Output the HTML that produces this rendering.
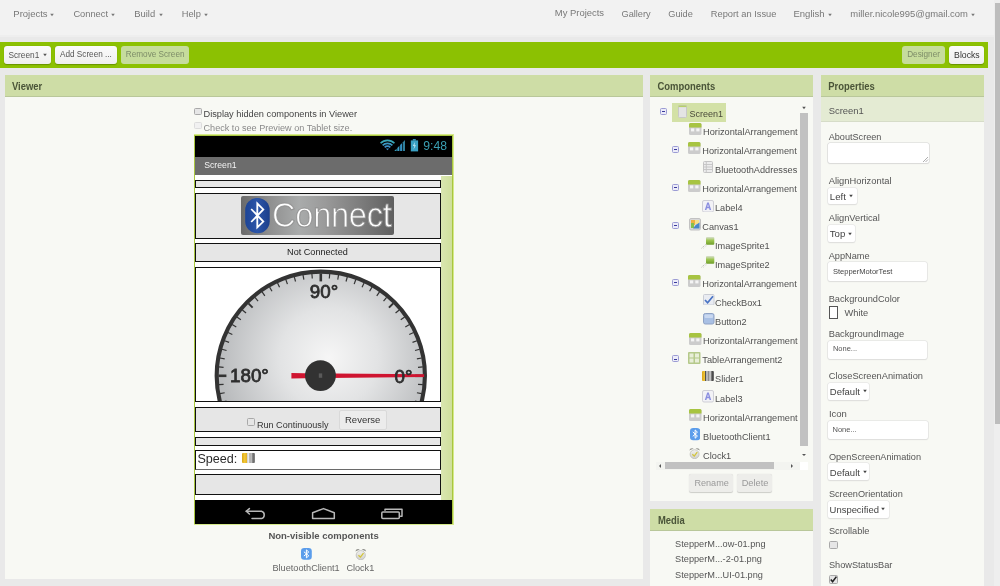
<!DOCTYPE html>
<html><head><meta charset="utf-8"><style>
html,body{margin:0;padding:0;width:1000px;height:586px;overflow:hidden;background:#e9e9e9;}
body{will-change:transform;}
.r{position:absolute;}
.t{position:absolute;white-space:nowrap;line-height:0;font-family:"Liberation Sans", sans-serif;}
</style></head><body>
<div class="r" style="left:0.00px;top:0.00px;width:1000.00px;height:586.00px;background:#e9e9e9"></div>
<div class="r" style="left:0.00px;top:0.00px;width:994.00px;height:34.50px;background:#f2f2f2"></div>
<div class="r" style="left:0.00px;top:34.50px;width:994.00px;height:2.50px;background:#eeeeee"></div>
<div class="r" style="left:994.00px;top:0.00px;width:6.00px;height:586.00px;background:#eeeeee"></div>
<div class="r" style="left:995.20px;top:3.00px;width:4.80px;height:421.00px;background:#bdbdbd"></div>
<div class="t" style="left:13.30px;top:14.11px;font-size:9.5px;color:#787878;font-weight:normal;">Projects</div>
<svg class="r" style="left:49.40px;top:11.80px" width="6" height="6" viewBox="0 0 6 6"><path d="M1.20,1.75 L4.80,1.75 L3,4.25 Z" fill="#787878"/></svg>
<div class="t" style="left:73.40px;top:14.18px;font-size:9.3px;color:#787878;font-weight:normal;">Connect</div>
<svg class="r" style="left:110.40px;top:11.80px" width="6" height="6" viewBox="0 0 6 6"><path d="M1.20,1.75 L4.80,1.75 L3,4.25 Z" fill="#787878"/></svg>
<div class="t" style="left:134.30px;top:14.14px;font-size:9.4px;color:#787878;font-weight:normal;">Build</div>
<svg class="r" style="left:157.80px;top:11.80px" width="6" height="6" viewBox="0 0 6 6"><path d="M1.20,1.75 L4.80,1.75 L3,4.25 Z" fill="#787878"/></svg>
<div class="t" style="left:181.70px;top:14.18px;font-size:9.3px;color:#787878;font-weight:normal;">Help</div>
<svg class="r" style="left:203.40px;top:11.80px" width="6" height="6" viewBox="0 0 6 6"><path d="M1.20,1.75 L4.80,1.75 L3,4.25 Z" fill="#787878"/></svg>
<div class="t" style="left:554.80px;top:13.42px;font-size:9.45px;color:#787878;font-weight:normal;">My Projects</div>
<div class="t" style="left:621.50px;top:13.51px;font-size:9.2px;color:#787878;font-weight:normal;">Gallery</div>
<div class="t" style="left:668.30px;top:13.51px;font-size:9.2px;color:#787878;font-weight:normal;">Guide</div>
<div class="t" style="left:710.80px;top:14.08px;font-size:9.3px;color:#787878;font-weight:normal;">Report an Issue</div>
<div class="t" style="left:793.50px;top:14.21px;font-size:9.5px;color:#787878;font-weight:normal;">English</div>
<svg class="r" style="left:826.60px;top:11.80px" width="6" height="6" viewBox="0 0 6 6"><path d="M1.20,1.75 L4.80,1.75 L3,4.25 Z" fill="#787878"/></svg>
<div class="t" style="left:850.30px;top:14.22px;font-size:9.45px;color:#787878;font-weight:normal;">miller.nicole995@gmail.com</div>
<svg class="r" style="left:969.80px;top:11.80px" width="6" height="6" viewBox="0 0 6 6"><path d="M1.20,1.75 L4.80,1.75 L3,4.25 Z" fill="#787878"/></svg>
<div class="r" style="left:0.00px;top:42.00px;width:988.00px;height:25.60px;background:#8cc102"></div>
<div class="r" style="left:3.60px;top:46.00px;width:47.40px;height:18.40px;background:linear-gradient(#fbfbfb,#efefef);border-radius:3px;box-shadow:0 0.5px 1px rgba(0,0,0,0.25)"></div>
<div class="t" style="left:8.40px;top:55.42px;font-size:8.3px;color:#555;font-weight:normal;">Screen1</div>
<svg class="r" style="left:41.80px;top:52.20px" width="6" height="6" viewBox="0 0 6 6"><path d="M1.20,1.70 L4.80,1.70 L3,4.30 Z" fill="#555"/></svg>
<div class="r" style="left:55.00px;top:46.00px;width:61.60px;height:18.40px;background:linear-gradient(#fbfbfb,#efefef);border-radius:3px;box-shadow:0 0.5px 1px rgba(0,0,0,0.25)"></div>
<div class="t" style="left:60.00px;top:55.46px;font-size:8.2px;color:#555;font-weight:normal;">Add Screen ...</div>
<div class="r" style="left:121.00px;top:46.00px;width:68.00px;height:18.40px;background:#c6dc9c;border-radius:3px;"></div>
<div class="t" style="left:125.80px;top:55.46px;font-size:8.2px;color:#7d8c68;font-weight:normal;">Remove Screen</div>
<div class="r" style="left:902.20px;top:46.00px;width:43.20px;height:18.40px;background:#c6dc9c;border-radius:3px;"></div>
<div class="t" style="left:907.20px;top:55.46px;font-size:8.2px;color:#7d8c68;font-weight:normal;">Designer</div>
<div class="r" style="left:949.40px;top:46.00px;width:34.80px;height:18.40px;background:linear-gradient(#fbfbfb,#efefef);border-radius:3px;box-shadow:0 0.5px 1px rgba(0,0,0,0.25)"></div>
<div class="t" style="left:954.10px;top:55.28px;font-size:8.7px;color:#333;font-weight:normal;">Blocks</div>
<div class="r" style="left:5.00px;top:74.70px;width:638.00px;height:504.30px;background:#f8f9f4"></div>
<div class="r" style="left:5.00px;top:74.70px;width:638.00px;height:22.30px;background:#cedda6;border-bottom:1px solid #b9c79a;box-sizing:border-box"></div>
<div class="t" style="left:11.90px;top:86.52px;font-size:9.45px;color:#4a5438;font-weight:bold;transform:scale(1.0,1.18);transform-origin:0.6px 3.28px;">Viewer</div>
<div class="r" style="left:650.00px;top:74.70px;width:163.20px;height:426.30px;background:#f8f9f4"></div>
<div class="r" style="left:650.00px;top:74.70px;width:163.20px;height:22.30px;background:#cedda6;border-bottom:1px solid #b9c79a;box-sizing:border-box"></div>
<div class="t" style="left:657.50px;top:86.52px;font-size:9.45px;color:#4a5438;font-weight:bold;transform:scale(1.0,1.18);transform-origin:0.6px 3.28px;">Components</div>
<div class="r" style="left:650.00px;top:508.60px;width:163.20px;height:77.40px;background:#f8f9f4"></div>
<div class="r" style="left:650.00px;top:508.60px;width:163.20px;height:22.40px;background:#cedda6;border-bottom:1px solid #b9c79a;box-sizing:border-box"></div>
<div class="t" style="left:657.90px;top:520.72px;font-size:9.45px;color:#4a5438;font-weight:bold;transform:scale(1.0,1.18);transform-origin:0.6px 3.28px;">Media</div>
<div class="r" style="left:821.00px;top:74.50px;width:163.00px;height:511.50px;background:#f8f9f4"></div>
<div class="r" style="left:821.00px;top:74.50px;width:163.00px;height:22.70px;background:#cedda6;border-bottom:1px solid #b9c79a;box-sizing:border-box"></div>
<div class="t" style="left:828.20px;top:86.52px;font-size:9.45px;color:#4a5438;font-weight:bold;transform:scale(1.0,1.18);transform-origin:0.6px 3.28px;">Properties</div>
<div class="r" style="left:821.00px;top:97.20px;width:163.00px;height:25.20px;background:#e4ebd3;border-bottom:1px solid #d6dcc8;box-sizing:border-box"></div>
<div class="r" style="left:194.30px;top:107.50px;width:7.90px;height:7.70px;background:#e6e6e6;border:1px solid #a9a9a9;border-radius:1.5px;box-sizing:border-box"></div>
<div class="t" style="left:203.50px;top:114.00px;font-size:9.22px;color:#444;font-weight:normal;">Display hidden components in Viewer</div>
<div class="r" style="left:194.30px;top:121.70px;width:7.90px;height:7.70px;background:#f1f1f1;border:1px solid #dcdcdc;border-radius:1.5px;box-sizing:border-box"></div>
<div class="t" style="left:203.50px;top:128.24px;font-size:9.12px;color:#8a8a8a;font-weight:normal;">Check to see Preview on Tablet size.</div>
<div class="r" style="left:193.60px;top:134.00px;width:260.40px;height:391.00px;background:#d6ea8a"></div>
<div class="r" style="left:194.30px;top:134.70px;width:258.80px;height:389.60px;background:#a9c640"></div>
<div class="r" style="left:195.30px;top:136.00px;width:256.50px;height:387.60px;background:#ffffff"></div>
<div class="r" style="left:195.30px;top:136.00px;width:256.50px;height:20.50px;background:#000"></div>
<div class="r" style="left:195.30px;top:156.50px;width:256.50px;height:18.30px;background:#6c6c6c"></div>
<div class="t" style="left:204.20px;top:164.98px;font-size:8.7px;color:#f4f4f4;font-weight:normal;transform:scale(1.0,1.08);transform-origin:0.6px 3.02px;">Screen1</div>
<div class="r" style="left:441.00px;top:176.00px;width:10.80px;height:324.30px;background:linear-gradient(90deg,#d9e6b0,#cfdf9c)"></div>
<div class="r" style="left:195.30px;top:500.20px;width:256.50px;height:23.40px;background:#000"></div>
<svg class="r" style="left:378px;top:137px" width="72" height="18" viewBox="378 137 72 18">
<g fill="none" stroke-width="1.7">
<path d="M394.43,143.27 A9.8,9.8 0 0 0 380.57,143.27" stroke="#3aa6b6"/>
<path d="M392.38,145.32 A6.9,6.9 0 0 0 382.62,145.32" stroke="#3a98c2"/>
<path d="M390.33,147.37 A4.0,4.0 0 0 0 384.67,147.37" stroke="#3a90c8"/>
</g>
<path d="M385.90,148.60 L387.5,150.2 L389.10,148.60 Z" fill="#3a90c8"/>
<path d="M394.5,151 L394.5,150.80 L396.6,148.66 L396.6,151 Z" fill="#3a9cb8"/><path d="M397.3,151 L397.3,147.94 L399.4,145.80 L399.4,151 Z" fill="#3a9cc4"/><path d="M400.1,151 L400.1,145.09 L402.2,142.95 L402.2,151 Z" fill="#3490c0"/><path d="M402.9,151 L402.9,142.24 L405.0,140.10 L405.0,151 Z" fill="#2f7f9c"/>
<rect x="412.8" y="139.1" width="3" height="1.5" fill="#3aa0c4"/>
<rect x="410.8" y="140.4" width="7.3" height="11" fill="#3aa0c4"/>
<path d="M415,142 L412.8,146 L414.4,146 L413.4,149.8 L416,145.2 L414.5,145.2 Z" fill="#bfe8f5"/>
</svg>
<div class="t" style="left:423.30px;top:145.67px;font-size:12.2px;color:#3a9fb2;font-weight:normal;transform:scaleY(1.06);transform-origin:0 0;">9:48</div>
<svg class="r" style="left:240px;top:503px" width="170" height="20" viewBox="240 503 170 20">
<g fill="none" stroke="#b8b8b8" stroke-width="1.5" stroke-linejoin="round" stroke-linecap="round">
<path d="M246.2,511.3 L261.5,511.3 A3.8,3.8 0 0 1 261.5,518.6 L252,518.6"/>
<path d="M249.4,508.6 L246.2,511.3 L249.4,514"/>
<path d="M312.6,512.8 L323.5,508.6 L334.3,512.8 L334.3,518.6 L312.6,518.6 Z"/>
<rect x="381.8" y="512" width="17.5" height="6.6" rx="1"/>
<path d="M385,510.2 L385,509.2 L402,509.2 L402,516.2 L400.5,516.2"/>
</g></svg>
<div class="r" style="left:195.00px;top:179.50px;width:245.60px;height:8.30px;background:#e6e6e6;border:1.35px solid #111;border-bottom-color:#111;box-sizing:border-box"></div>
<div class="r" style="left:195.00px;top:192.90px;width:245.60px;height:45.70px;background:#e6e6e6;border:1.35px solid #111;border-bottom-color:#111;box-sizing:border-box"></div>
<div class="r" style="left:195.00px;top:243.40px;width:245.60px;height:18.20px;background:#e6e6e6;border:1.35px solid #111;border-bottom-color:#111;box-sizing:border-box"></div>
<div class="r" style="left:195.00px;top:266.80px;width:245.60px;height:135.10px;background:#ffffff;border:1.35px solid #111;border-bottom-color:#111;box-sizing:border-box"></div>
<div class="r" style="left:195.00px;top:406.90px;width:245.60px;height:25.50px;background:#e6e6e6;border:1.35px solid #111;border-bottom-color:#111;box-sizing:border-box"></div>
<div class="r" style="left:195.00px;top:437.00px;width:245.60px;height:8.60px;background:#e6e6e6;border:1.35px solid #111;border-bottom-color:#111;box-sizing:border-box"></div>
<div class="r" style="left:195.00px;top:450.00px;width:245.60px;height:19.80px;background:#ffffff;border:1.35px solid #111;border-bottom-color:#6a6a6a;box-sizing:border-box"></div>
<div class="r" style="left:195.00px;top:474.20px;width:245.60px;height:21.00px;background:#e6e6e6;border:1.35px solid #111;border-bottom-color:#111;box-sizing:border-box"></div>
<div class="r" style="left:241.3px;top:196.3px;width:152.4px;height:38.6px;border-radius:2px;background:linear-gradient(90deg,#6a6a6a 0%,#8e8e8e 18%,#a9abab 38%,#9a9a9a 55%,#7a7a7a 80%,#5f5f5f 100%);"></div>
<svg class="r" style="left:244px;top:196px" width="28" height="40" viewBox="244 196 28 40">
<defs><linearGradient id="bg1" x1="0" y1="0" x2="1" y2="0"><stop offset="0" stop-color="#1d4496"/><stop offset="0.5" stop-color="#2c55a8"/><stop offset="1" stop-color="#1b3f8c"/></linearGradient></defs>
<rect x="245.2" y="197.9" width="24.5" height="35.3" rx="12" ry="12" fill="url(#bg1)"/>
<path d="M251.2,209 L263.3,221.6 L257.3,227.4 L257.3,203.5 L263.3,209.4 L251.2,222" fill="none" stroke="#fff" stroke-width="1.8" stroke-linejoin="miter"/>
</svg>
<div class="t" style="left:272.40px;top:215.37px;font-size:34.4px;color:#ffffff;font-weight:normal;transform:scale(0.947,1.0);transform-origin:2.2px 11.93px;letter-spacing:-0.3px;-webkit-text-stroke:1.1px rgba(140,140,140,0.85);">Connect</div>
<div class="t" style="left:287.10px;top:251.85px;font-size:9.1px;color:#222;font-weight:normal;">Not Connected</div>
<div class="r" style="left:247.20px;top:417.60px;width:8.30px;height:8.00px;background:#e6e6e6;border:1px solid #a9a9a9;border-radius:1.5px;box-sizing:border-box"></div>
<div class="t" style="left:257.00px;top:424.56px;font-size:9.05px;color:#333;font-weight:normal;">Run Continuously</div>
<div class="r" style="left:339.20px;top:409.60px;width:47.70px;height:20.00px;background:#ececec;border:1px solid #d9d9d9;border-radius:2px;box-sizing:border-box"></div>
<div class="t" style="left:345.00px;top:419.61px;font-size:9.5px;color:#333;font-weight:normal;">Reverse</div>
<div class="t" style="left:197.40px;top:458.83px;font-size:12.6px;color:#2a2a2a;font-weight:normal;transform:scaleY(1.05);transform-origin:0 0;">Speed:</div>
<div class="r" style="left:241.6px;top:453.4px;width:13.6px;height:10px;background:linear-gradient(90deg,#d9a614 0%,#f2c838 20%,#e6b52a 35%,#c9c9c9 38%,#eaeaea 50%,#9d9d9d 62%,#d0d0d0 70%,#6a6a6a 85%,#8a8a8a 100%);border-radius:1px"></div>
<svg class="r" style="left:196.8px;top:268.6px" width="242.1" height="132.2" viewBox="196.8 268.6 242.1 132.2">
<defs><radialGradient id="gg" cx="328.6" cy="357.4" r="110" gradientUnits="userSpaceOnUse">
<stop offset="0" stop-color="#f6f6f6"/><stop offset="0.45" stop-color="#e2e3e4"/><stop offset="1" stop-color="#b9bbbd"/></radialGradient></defs>
<circle cx="320.6" cy="375.4" r="104.15" fill="url(#gg)" stroke="#333" stroke-width="4.1"/>
<g stroke="#333"><line x1="423.00" y1="375.40" x2="415.00" y2="375.40" stroke-width="2.6"/>
<line x1="422.61" y1="366.48" x2="417.83" y2="366.89" stroke-width="1.2"/>
<line x1="421.44" y1="357.62" x2="416.72" y2="358.45" stroke-width="1.2"/>
<line x1="419.51" y1="348.90" x2="414.87" y2="350.14" stroke-width="1.2"/>
<line x1="416.82" y1="340.38" x2="412.31" y2="342.02" stroke-width="1.2"/>
<line x1="413.41" y1="332.12" x2="409.06" y2="334.15" stroke-width="1.2"/>
<line x1="409.28" y1="324.20" x2="405.12" y2="326.60" stroke-width="1.2"/>
<line x1="404.48" y1="316.67" x2="400.55" y2="319.42" stroke-width="1.2"/>
<line x1="399.04" y1="309.58" x2="395.37" y2="312.66" stroke-width="1.2"/>
<line x1="393.01" y1="302.99" x2="388.77" y2="307.23" stroke-width="2.0"/>
<line x1="386.42" y1="296.96" x2="383.34" y2="300.63" stroke-width="1.2"/>
<line x1="379.33" y1="291.52" x2="376.58" y2="295.45" stroke-width="1.2"/>
<line x1="371.80" y1="286.72" x2="369.40" y2="290.88" stroke-width="1.2"/>
<line x1="363.88" y1="282.59" x2="361.85" y2="286.94" stroke-width="1.2"/>
<line x1="355.62" y1="279.18" x2="353.98" y2="283.69" stroke-width="1.2"/>
<line x1="347.10" y1="276.49" x2="345.86" y2="281.13" stroke-width="1.2"/>
<line x1="338.38" y1="274.56" x2="337.55" y2="279.28" stroke-width="1.2"/>
<line x1="329.52" y1="273.39" x2="329.11" y2="278.17" stroke-width="1.2"/>
<line x1="320.60" y1="273.00" x2="320.60" y2="281.00" stroke-width="2.6"/>
<line x1="311.68" y1="273.39" x2="312.09" y2="278.17" stroke-width="1.2"/>
<line x1="302.82" y1="274.56" x2="303.65" y2="279.28" stroke-width="1.2"/>
<line x1="294.10" y1="276.49" x2="295.34" y2="281.13" stroke-width="1.2"/>
<line x1="285.58" y1="279.18" x2="287.22" y2="283.69" stroke-width="1.2"/>
<line x1="277.32" y1="282.59" x2="279.35" y2="286.94" stroke-width="1.2"/>
<line x1="269.40" y1="286.72" x2="271.80" y2="290.88" stroke-width="1.2"/>
<line x1="261.87" y1="291.52" x2="264.62" y2="295.45" stroke-width="1.2"/>
<line x1="254.78" y1="296.96" x2="257.86" y2="300.63" stroke-width="1.2"/>
<line x1="248.19" y1="302.99" x2="252.43" y2="307.23" stroke-width="2.0"/>
<line x1="242.16" y1="309.58" x2="245.83" y2="312.66" stroke-width="1.2"/>
<line x1="236.72" y1="316.67" x2="240.65" y2="319.42" stroke-width="1.2"/>
<line x1="231.92" y1="324.20" x2="236.08" y2="326.60" stroke-width="1.2"/>
<line x1="227.79" y1="332.12" x2="232.14" y2="334.15" stroke-width="1.2"/>
<line x1="224.38" y1="340.38" x2="228.89" y2="342.02" stroke-width="1.2"/>
<line x1="221.69" y1="348.90" x2="226.33" y2="350.14" stroke-width="1.2"/>
<line x1="219.76" y1="357.62" x2="224.48" y2="358.45" stroke-width="1.2"/>
<line x1="218.59" y1="366.48" x2="223.37" y2="366.89" stroke-width="1.2"/>
<line x1="218.20" y1="375.40" x2="226.20" y2="375.40" stroke-width="2.6"/>
<line x1="218.59" y1="384.32" x2="223.37" y2="383.91" stroke-width="1.2"/>
<line x1="219.76" y1="393.18" x2="224.48" y2="392.35" stroke-width="1.2"/>
<line x1="221.69" y1="401.90" x2="226.33" y2="400.66" stroke-width="1.2"/>
<line x1="224.38" y1="410.42" x2="228.89" y2="408.78" stroke-width="1.2"/>
<line x1="227.79" y1="418.68" x2="232.14" y2="416.65" stroke-width="1.2"/>
<line x1="231.92" y1="426.60" x2="236.08" y2="424.20" stroke-width="1.2"/>
<line x1="236.72" y1="434.13" x2="240.65" y2="431.38" stroke-width="1.2"/>
<line x1="242.16" y1="441.22" x2="245.83" y2="438.14" stroke-width="1.2"/>
<line x1="248.19" y1="447.81" x2="252.43" y2="443.57" stroke-width="2.0"/>
<line x1="254.78" y1="453.84" x2="257.86" y2="450.17" stroke-width="1.2"/>
<line x1="261.87" y1="459.28" x2="264.62" y2="455.35" stroke-width="1.2"/>
<line x1="269.40" y1="464.08" x2="271.80" y2="459.92" stroke-width="1.2"/>
<line x1="277.32" y1="468.21" x2="279.35" y2="463.86" stroke-width="1.2"/>
<line x1="285.58" y1="471.62" x2="287.22" y2="467.11" stroke-width="1.2"/>
<line x1="294.10" y1="474.31" x2="295.34" y2="469.67" stroke-width="1.2"/>
<line x1="302.82" y1="476.24" x2="303.65" y2="471.52" stroke-width="1.2"/>
<line x1="311.68" y1="477.41" x2="312.09" y2="472.63" stroke-width="1.2"/>
<line x1="320.60" y1="477.80" x2="320.60" y2="469.80" stroke-width="2.6"/>
<line x1="329.52" y1="477.41" x2="329.11" y2="472.63" stroke-width="1.2"/>
<line x1="338.38" y1="476.24" x2="337.55" y2="471.52" stroke-width="1.2"/>
<line x1="347.10" y1="474.31" x2="345.86" y2="469.67" stroke-width="1.2"/>
<line x1="355.62" y1="471.62" x2="353.98" y2="467.11" stroke-width="1.2"/>
<line x1="363.88" y1="468.21" x2="361.85" y2="463.86" stroke-width="1.2"/>
<line x1="371.80" y1="464.08" x2="369.40" y2="459.92" stroke-width="1.2"/>
<line x1="379.33" y1="459.28" x2="376.58" y2="455.35" stroke-width="1.2"/>
<line x1="386.42" y1="453.84" x2="383.34" y2="450.17" stroke-width="1.2"/>
<line x1="393.01" y1="447.81" x2="388.77" y2="443.57" stroke-width="2.0"/>
<line x1="399.04" y1="441.22" x2="395.37" y2="438.14" stroke-width="1.2"/>
<line x1="404.48" y1="434.13" x2="400.55" y2="431.38" stroke-width="1.2"/>
<line x1="409.28" y1="426.60" x2="405.12" y2="424.20" stroke-width="1.2"/>
<line x1="413.41" y1="418.68" x2="409.06" y2="416.65" stroke-width="1.2"/>
<line x1="416.82" y1="410.42" x2="412.31" y2="408.78" stroke-width="1.2"/>
<line x1="419.51" y1="401.90" x2="414.87" y2="400.66" stroke-width="1.2"/>
<line x1="421.44" y1="393.18" x2="416.72" y2="392.35" stroke-width="1.2"/>
<line x1="422.61" y1="384.32" x2="417.83" y2="383.91" stroke-width="1.2"/></g>
<path d="M291.2,372.6 L304,372.9 L424,373.8 L424,376.7 L304,377.9 L291.2,378.2 Z" fill="#cf1430"/>
<circle cx="320.25" cy="375.2" r="15.4" fill="#323232"/>
<rect x="318.6" y="373" width="3.4" height="4.4" fill="#5a5a5a"/>
<g font-family="'Liberation Sans'" font-weight="normal" fill="#2e2e2e" stroke="#2e2e2e" stroke-width="0.8" font-size="18.8">
<text x="309.6" y="297.4">90°</text>
<text x="229.8" y="381.6">180°</text>
<text x="394.4" y="382.8">0°</text>
</g>
</svg>
<div class="r" style="left:650px;top:97px;width:148.6px;height:364px;overflow:hidden">
<div class="r" style="left:-650px;top:-97px;width:1000px;height:586px"><div class="r" style="left:671.50px;top:102.90px;width:54.20px;height:18.70px;background:#d3e1a6"></div>
<div class="r" style="left:660.10px;top:107.60px;width:7px;height:7px;box-sizing:border-box;border:1px solid #9c9cd4;border-radius:1.5px;background:#ececf8"></div>
<div class="r" style="left:661.90px;top:110.70px;width:3.40px;height:1.10px;background:#3b3b9c"></div>
<svg class="r" style="left:677.70px;top:104.60px" width="9" height="13" viewBox="0 0 9 13"><rect x="0.5" y="0.5" width="8" height="12" rx="1" fill="#e4e4e4" stroke="#c8c8c8" stroke-width="1"/><rect x="0.5" y="0.5" width="8" height="1.6" fill="#b6cf6a"/></svg>
<div class="t" style="left:689.60px;top:113.98px;font-size:9.0px;color:#4a4a3a;font-weight:normal;">Screen1</div>
<svg class="r" style="left:689.30px;top:122.86px" width="12.5" height="12" viewBox="0 0 12.5 12"><rect x="0" y="0" width="12.5" height="12" rx="1.5" fill="#cccccc"/><path d="M0,1.5 A1.5,1.5 0 0 1 1.5,0 L11,0 A1.5,1.5 0 0 1 12.5,1.5 L12.5,4.4 L0,4.4 Z" fill="#a7c441"/><rect x="2" y="5.4" width="3.2" height="3" fill="#f4f4f4"/><rect x="7.3" y="5.4" width="3.2" height="3" fill="#f4f4f4"/></svg>
<div class="t" style="left:703.10px;top:131.57px;font-size:9.2px;color:#505050;font-weight:normal;">HorizontalArrangement</div>
<div class="r" style="left:672.10px;top:145.63px;width:7px;height:7px;box-sizing:border-box;border:1px solid #9c9cd4;border-radius:1.5px;background:#ececf8"></div>
<div class="r" style="left:673.90px;top:148.73px;width:3.40px;height:1.10px;background:#3b3b9c"></div>
<svg class="r" style="left:688.20px;top:141.93px" width="12.5" height="12" viewBox="0 0 12.5 12"><rect x="0" y="0" width="12.5" height="12" rx="1.5" fill="#cccccc"/><path d="M0,1.5 A1.5,1.5 0 0 1 1.5,0 L11,0 A1.5,1.5 0 0 1 12.5,1.5 L12.5,4.4 L0,4.4 Z" fill="#a7c441"/><rect x="2" y="5.4" width="3.2" height="3" fill="#f4f4f4"/><rect x="7.3" y="5.4" width="3.2" height="3" fill="#f4f4f4"/></svg>
<div class="t" style="left:702.30px;top:150.64px;font-size:9.2px;color:#505050;font-weight:normal;">HorizontalArrangement</div>
<svg class="r" style="left:703.30px;top:161.10px" width="10" height="12" viewBox="0 0 10 12"><rect x="0.5" y="0.5" width="9" height="11" rx="1" fill="#ececec" stroke="#c4c4c4"/><g stroke="#c4c4c4" stroke-width="0.9"><line x1="1" y1="3.5" x2="9" y2="3.5"/><line x1="1" y1="6" x2="9" y2="6"/><line x1="1" y1="8.5" x2="9" y2="8.5"/><line x1="3.3" y1="1" x2="3.3" y2="11"/></g></svg>
<div class="t" style="left:715.00px;top:169.71px;font-size:9.2px;color:#505050;font-weight:normal;">BluetoothAddresses</div>
<div class="r" style="left:672.10px;top:183.77px;width:7px;height:7px;box-sizing:border-box;border:1px solid #9c9cd4;border-radius:1.5px;background:#ececf8"></div>
<div class="r" style="left:673.90px;top:186.87px;width:3.40px;height:1.10px;background:#3b3b9c"></div>
<svg class="r" style="left:688.20px;top:180.07px" width="12.5" height="12" viewBox="0 0 12.5 12"><rect x="0" y="0" width="12.5" height="12" rx="1.5" fill="#cccccc"/><path d="M0,1.5 A1.5,1.5 0 0 1 1.5,0 L11,0 A1.5,1.5 0 0 1 12.5,1.5 L12.5,4.4 L0,4.4 Z" fill="#a7c441"/><rect x="2" y="5.4" width="3.2" height="3" fill="#f4f4f4"/><rect x="7.3" y="5.4" width="3.2" height="3" fill="#f4f4f4"/></svg>
<div class="t" style="left:702.30px;top:188.78px;font-size:9.2px;color:#505050;font-weight:normal;">HorizontalArrangement</div>
<svg class="r" style="left:702.20px;top:199.54px" width="12" height="12.5" viewBox="0 0 12 12.5"><rect x="0.5" y="0.5" width="11" height="11.5" rx="1.5" fill="#f2f2f6" stroke="#cfcfd6"/><path d="M2.8,10 L5.2,2.4 L6.8,2.4 L9.2,10 L7.6,10 L7.1,8.2 L4.9,8.2 L4.4,10 Z M5.3,6.8 L6.7,6.8 L6,4.2 Z" fill="#8a8ee0" fill-rule="evenodd"/></svg>
<div class="t" style="left:715.00px;top:207.85px;font-size:9.2px;color:#505050;font-weight:normal;">Label4</div>
<div class="r" style="left:672.10px;top:221.91px;width:7px;height:7px;box-sizing:border-box;border:1px solid #9c9cd4;border-radius:1.5px;background:#ececf8"></div>
<div class="r" style="left:673.90px;top:225.01px;width:3.40px;height:1.10px;background:#3b3b9c"></div>
<svg class="r" style="left:688.60px;top:218.01px" width="12" height="12.5" viewBox="0 0 12 12.5"><rect x="0.5" y="0.5" width="11" height="11.5" rx="1.5" fill="#d9d9d9" stroke="#c2c2c2"/><rect x="2" y="2" width="4" height="5" fill="#f0b040"/><rect x="6" y="2" width="4" height="4" fill="#f7e08a"/><rect x="2" y="5" width="3" height="5" fill="#86c04a"/><path d="M4,10.5 L10.5,10.5 L10.5,4.5 Q7,6 4,10.5Z" fill="#4a86c8"/></svg>
<div class="t" style="left:702.30px;top:226.92px;font-size:9.2px;color:#505050;font-weight:normal;">Canvas1</div>
<svg class="r" style="left:701.00px;top:237.18px" width="14" height="12" viewBox="0 0 14 12"><defs><linearGradient id="sp237" x1="0" y1="0" x2="0" y2="1"><stop offset="0" stop-color="#d9dfcf"/><stop offset="0.45" stop-color="#9cc550"/><stop offset="1" stop-color="#6f9e2a"/></linearGradient></defs><rect x="5" y="0" width="8.3" height="7.8" rx="1" fill="url(#sp237)"/><path d="M0.5,11.3 L5.5,6.8" stroke="#b5b5b5" stroke-width="0.9" stroke-dasharray="1.3 0.9"/><path d="M2.2,11.5 L5.8,8.5" stroke="#c9c9c9" stroke-width="0.7" stroke-dasharray="1 1"/></svg>
<div class="t" style="left:715.00px;top:245.99px;font-size:9.2px;color:#505050;font-weight:normal;">ImageSprite1</div>
<svg class="r" style="left:701.00px;top:256.25px" width="14" height="12" viewBox="0 0 14 12"><defs><linearGradient id="sp256" x1="0" y1="0" x2="0" y2="1"><stop offset="0" stop-color="#d9dfcf"/><stop offset="0.45" stop-color="#9cc550"/><stop offset="1" stop-color="#6f9e2a"/></linearGradient></defs><rect x="5" y="0" width="8.3" height="7.8" rx="1" fill="url(#sp256)"/><path d="M0.5,11.3 L5.5,6.8" stroke="#b5b5b5" stroke-width="0.9" stroke-dasharray="1.3 0.9"/><path d="M2.2,11.5 L5.8,8.5" stroke="#c9c9c9" stroke-width="0.7" stroke-dasharray="1 1"/></svg>
<div class="t" style="left:715.00px;top:265.06px;font-size:9.2px;color:#505050;font-weight:normal;">ImageSprite2</div>
<div class="r" style="left:672.10px;top:279.12px;width:7px;height:7px;box-sizing:border-box;border:1px solid #9c9cd4;border-radius:1.5px;background:#ececf8"></div>
<div class="r" style="left:673.90px;top:282.22px;width:3.40px;height:1.10px;background:#3b3b9c"></div>
<svg class="r" style="left:688.20px;top:275.42px" width="12.5" height="12" viewBox="0 0 12.5 12"><rect x="0" y="0" width="12.5" height="12" rx="1.5" fill="#cccccc"/><path d="M0,1.5 A1.5,1.5 0 0 1 1.5,0 L11,0 A1.5,1.5 0 0 1 12.5,1.5 L12.5,4.4 L0,4.4 Z" fill="#a7c441"/><rect x="2" y="5.4" width="3.2" height="3" fill="#f4f4f4"/><rect x="7.3" y="5.4" width="3.2" height="3" fill="#f4f4f4"/></svg>
<div class="t" style="left:702.30px;top:284.13px;font-size:9.2px;color:#505050;font-weight:normal;">HorizontalArrangement</div>
<svg class="r" style="left:703.00px;top:293.99px" width="11.5" height="11.5" viewBox="0 0 11.5 11.5"><rect x="0.5" y="0.5" width="10.5" height="10.5" rx="1" fill="#e9ecf2" stroke="#c9ccd4"/><path d="M2,6 L4.6,8.8 L10,2.2" fill="none" stroke="#4a74c4" stroke-width="1.7"/></svg>
<div class="t" style="left:715.00px;top:303.20px;font-size:9.2px;color:#505050;font-weight:normal;">CheckBox1</div>
<svg class="r" style="left:703.00px;top:313.06px" width="11.5" height="11.5" viewBox="0 0 11.5 11.5"><rect x="0.5" y="0.5" width="10.5" height="10.5" rx="1.8" fill="#a9c0e4" stroke="#8fa2c4"/><rect x="1.5" y="1.5" width="8.5" height="3.5" rx="1" fill="#c9d8f0"/></svg>
<div class="t" style="left:715.00px;top:322.27px;font-size:9.2px;color:#505050;font-weight:normal;">Button2</div>
<svg class="r" style="left:689.30px;top:332.63px" width="12.5" height="12" viewBox="0 0 12.5 12"><rect x="0" y="0" width="12.5" height="12" rx="1.5" fill="#cccccc"/><path d="M0,1.5 A1.5,1.5 0 0 1 1.5,0 L11,0 A1.5,1.5 0 0 1 12.5,1.5 L12.5,4.4 L0,4.4 Z" fill="#a7c441"/><rect x="2" y="5.4" width="3.2" height="3" fill="#f4f4f4"/><rect x="7.3" y="5.4" width="3.2" height="3" fill="#f4f4f4"/></svg>
<div class="t" style="left:703.10px;top:341.34px;font-size:9.2px;color:#505050;font-weight:normal;">HorizontalArrangement</div>
<div class="r" style="left:672.10px;top:355.40px;width:7px;height:7px;box-sizing:border-box;border:1px solid #9c9cd4;border-radius:1.5px;background:#ececf8"></div>
<div class="r" style="left:673.90px;top:358.50px;width:3.40px;height:1.10px;background:#3b3b9c"></div>
<svg class="r" style="left:688.20px;top:351.70px" width="12.5" height="12" viewBox="0 0 12.5 12"><rect x="0" y="0" width="12.5" height="12" rx="1" fill="#b5c98a"/><rect x="1.5" y="1.5" width="4" height="4" fill="#e8eed8"/><rect x="7" y="1.5" width="4" height="4" fill="#e8eed8"/><rect x="1.5" y="6.5" width="4" height="4" fill="#e8eed8"/><rect x="7" y="6.5" width="4" height="4" fill="#e8eed8"/></svg>
<div class="t" style="left:702.30px;top:360.41px;font-size:9.2px;color:#505050;font-weight:normal;">TableArrangement2</div>
<div class="r" style="left:701.70px;top:371.37px;width:12.7px;height:9.6px;background:linear-gradient(90deg,#d8a417 0%,#f0c63a 22%,#2a2a2a 26%,#d4d4d4 40%,#8a8a8a 55%,#dcdcdc 68%,#444 85%,#777 100%);border-radius:1px"></div>
<div class="t" style="left:715.00px;top:379.48px;font-size:9.2px;color:#505050;font-weight:normal;">Slider1</div>
<svg class="r" style="left:702.20px;top:390.24px" width="12" height="12.5" viewBox="0 0 12 12.5"><rect x="0.5" y="0.5" width="11" height="11.5" rx="1.5" fill="#f2f2f6" stroke="#cfcfd6"/><path d="M2.8,10 L5.2,2.4 L6.8,2.4 L9.2,10 L7.6,10 L7.1,8.2 L4.9,8.2 L4.4,10 Z M5.3,6.8 L6.7,6.8 L6,4.2 Z" fill="#8a8ee0" fill-rule="evenodd"/></svg>
<div class="t" style="left:715.00px;top:398.55px;font-size:9.2px;color:#505050;font-weight:normal;">Label3</div>
<svg class="r" style="left:689.30px;top:408.91px" width="12.5" height="12" viewBox="0 0 12.5 12"><rect x="0" y="0" width="12.5" height="12" rx="1.5" fill="#cccccc"/><path d="M0,1.5 A1.5,1.5 0 0 1 1.5,0 L11,0 A1.5,1.5 0 0 1 12.5,1.5 L12.5,4.4 L0,4.4 Z" fill="#a7c441"/><rect x="2" y="5.4" width="3.2" height="3" fill="#f4f4f4"/><rect x="7.3" y="5.4" width="3.2" height="3" fill="#f4f4f4"/></svg>
<div class="t" style="left:703.10px;top:417.62px;font-size:9.2px;color:#505050;font-weight:normal;">HorizontalArrangement</div>
<svg class="r" style="left:690.20px;top:428.38px" width="10.3" height="12.2" viewBox="0 0 10.3 12.2"><rect x="0" y="0" width="10.3" height="12.2" rx="3.2" fill="#5b9deb"/><path d="M2.78,3.90 L7.42,8.05 L5.15,10.25 L5.15,1.95 L7.42,4.15 L2.78,8.30" fill="none" stroke="#fff" stroke-width="1"/></svg>
<div class="t" style="left:703.10px;top:436.69px;font-size:9.2px;color:#505050;font-weight:normal;">BluetoothClient1</div>
<svg class="r" style="left:689.40px;top:447.35px" width="11.2" height="12" viewBox="0 0 11.2 12"><defs><linearGradient id="ck689" x1="0" y1="0" x2="0" y2="1"><stop offset="0" stop-color="#f2f2f0"/><stop offset="1" stop-color="#cfcfcb"/></linearGradient></defs><circle cx="5.60" cy="7.20" r="4.48" fill="url(#ck689)" stroke="#bdbdb8" stroke-width="0.8"/><path d="M3.36,7.20 L5.26,9.12 L8.29,5.04" fill="none" stroke="#d2c43a" stroke-width="1.3"/><path d="M0.3,3.60 Q1.12,0.24 4.70,1.44 Z" fill="#8f8f8a"/><path d="M10.90,3.60 Q10.08,0.24 6.50,1.44 Z" fill="#8f8f8a"/></svg>
<div class="t" style="left:703.10px;top:455.76px;font-size:9.2px;color:#505050;font-weight:normal;">Clock1</div></div></div>
<svg class="r" style="left:800.80px;top:105.30px" width="6" height="6" viewBox="0 0 6 6"><path d="M1.20,1.70 L4.80,1.70 L3,4.30 Z" fill="#555"/></svg>
<div class="r" style="left:799.80px;top:113.10px;width:8.10px;height:333.20px;background:#c1c1c1"></div>
<div class="r" style="left:801.8px;top:453.6px;width:0;height:0;border-left:2px solid transparent;border-right:2px solid transparent;border-top:2.4px solid #555"></div>
<div class="r" style="left:656.00px;top:461.50px;width:143.80px;height:8.00px;background:#f3f4f0"></div>
<div class="r" style="left:665.00px;top:461.80px;width:109.20px;height:7.50px;background:#c1c1c1"></div>
<div class="r" style="left:658.8px;top:463.8px;width:0;height:0;border-top:2px solid transparent;border-bottom:2px solid transparent;border-right:2.4px solid #555"></div>
<div class="r" style="left:791px;top:463.8px;width:0;height:0;border-top:2px solid transparent;border-bottom:2px solid transparent;border-left:2.4px solid #555"></div>
<div class="r" style="left:799.80px;top:461.50px;width:8.10px;height:8.00px;background:#ffffff"></div>
<div class="r" style="left:689.20px;top:474.20px;width:44.30px;height:18.30px;background:#ededea;border-radius:2px;box-shadow:0 0.6px 1px rgba(0,0,0,0.18)"></div>
<div class="t" style="left:694.40px;top:483.45px;font-size:9.1px;color:#9a9a9a;font-weight:normal;">Rename</div>
<div class="r" style="left:736.50px;top:474.20px;width:35.90px;height:18.30px;background:#ededea;border-radius:2px;box-shadow:0 0.6px 1px rgba(0,0,0,0.18)"></div>
<div class="t" style="left:741.70px;top:483.39px;font-size:9.25px;color:#9a9a9a;font-weight:normal;">Delete</div>
<div class="t" style="left:675.10px;top:543.71px;font-size:9.2px;color:#555;font-weight:normal;">StepperM...ow-01.png</div>
<div class="t" style="left:675.10px;top:559.41px;font-size:9.2px;color:#555;font-weight:normal;">StepperM...-2-01.png</div>
<div class="t" style="left:675.10px;top:575.11px;font-size:9.2px;color:#555;font-weight:normal;">StepperM...UI-01.png</div>
<div class="t" style="left:828.70px;top:111.32px;font-size:9.45px;color:#555;font-weight:normal;">Screen1</div>
<div class="t" style="left:828.70px;top:136.93px;font-size:9.15px;color:#555;font-weight:normal;">AboutScreen</div>
<div class="r" style="left:827.70px;top:142.70px;width:101.70px;height:20.60px;background:#ffffff;border-radius:2px;box-shadow:0 0 0 0.6px #d6d6d6, 0 0.8px 1.2px rgba(0,0,0,0.10)"></div>
<svg class="r" style="left:921px;top:155px" width="8" height="8" viewBox="0 0 8 8"><path d="M7,2 L2,7 M7,4.5 L4.5,7" stroke="#999" stroke-width="0.8"/></svg>
<div class="t" style="left:828.70px;top:181.06px;font-size:9.35px;color:#555;font-weight:normal;">AlignHorizontal</div>
<div class="r" style="left:827.70px;top:187.70px;width:28.90px;height:16.60px;background:#ffffff;border-radius:2px;box-shadow:0 0 0 0.6px #e2e2e2, 0 0.8px 1.2px rgba(0,0,0,0.12)"></div>
<div class="t" style="left:829.80px;top:196.67px;font-size:9.6px;color:#444;font-weight:normal;">Left</div>
<svg class="r" style="left:848.30px;top:193.00px" width="6" height="6" viewBox="0 0 6 6"><path d="M1.20,1.70 L4.80,1.70 L3,4.30 Z" fill="#444"/></svg>
<div class="t" style="left:828.70px;top:218.38px;font-size:9.3px;color:#555;font-weight:normal;">AlignVertical</div>
<div class="r" style="left:827.70px;top:225.30px;width:27.50px;height:16.70px;background:#ffffff;border-radius:2px;box-shadow:0 0 0 0.6px #e2e2e2, 0 0.8px 1.2px rgba(0,0,0,0.12)"></div>
<div class="t" style="left:829.80px;top:234.37px;font-size:9.6px;color:#444;font-weight:normal;">Top</div>
<svg class="r" style="left:847.00px;top:230.65px" width="6" height="6" viewBox="0 0 6 6"><path d="M1.20,1.70 L4.80,1.70 L3,4.30 Z" fill="#444"/></svg>
<div class="t" style="left:828.70px;top:256.21px;font-size:9.2px;color:#555;font-weight:normal;">AppName</div>
<div class="r" style="left:827.70px;top:262.20px;width:99.80px;height:19.10px;background:#ffffff;border-radius:2px;box-shadow:0 0 0 0.6px #dedede, 0 0.8px 1.2px rgba(0,0,0,0.10)"></div>
<div class="t" style="left:832.90px;top:271.58px;font-size:7.55px;color:#444;font-weight:normal;">StepperMotorTest</div>
<div class="t" style="left:828.70px;top:298.50px;font-size:9.22px;color:#555;font-weight:normal;">BackgroundColor</div>
<div class="r" style="left:829.00px;top:305.90px;width:8.50px;height:12.70px;background:#fff;border:1px solid #555;box-sizing:border-box"></div>
<div class="t" style="left:844.60px;top:312.59px;font-size:9.25px;color:#555;font-weight:normal;">White</div>
<div class="t" style="left:828.70px;top:333.68px;font-size:9.3px;color:#555;font-weight:normal;">BackgroundImage</div>
<div class="r" style="left:827.70px;top:340.80px;width:99.80px;height:18.60px;background:#ffffff;border-radius:2px;box-shadow:0 0 0 0.6px #dedede, 0 0.8px 1.2px rgba(0,0,0,0.10)"></div>
<div class="t" style="left:832.90px;top:349.40px;font-size:7.5px;color:#555;font-weight:normal;">None...</div>
<div class="t" style="left:828.70px;top:376.08px;font-size:9.28px;color:#555;font-weight:normal;">CloseScreenAnimation</div>
<div class="r" style="left:827.70px;top:382.70px;width:41.60px;height:17.20px;background:#ffffff;border-radius:2px;box-shadow:0 0 0 0.6px #e2e2e2, 0 0.8px 1.2px rgba(0,0,0,0.12)"></div>
<div class="t" style="left:829.80px;top:392.31px;font-size:9.5px;color:#444;font-weight:normal;">Default</div>
<svg class="r" style="left:861.50px;top:388.30px" width="6" height="6" viewBox="0 0 6 6"><path d="M1.20,1.70 L4.80,1.70 L3,4.30 Z" fill="#444"/></svg>
<div class="t" style="left:828.90px;top:413.81px;font-size:9.5px;color:#555;font-weight:normal;">Icon</div>
<div class="r" style="left:827.70px;top:420.60px;width:99.90px;height:18.40px;background:#ffffff;border-radius:2px;box-shadow:0 0 0 0.6px #dedede, 0 0.8px 1.2px rgba(0,0,0,0.10)"></div>
<div class="t" style="left:832.50px;top:430.30px;font-size:7.5px;color:#555;font-weight:normal;">None...</div>
<div class="t" style="left:828.90px;top:456.72px;font-size:9.16px;color:#555;font-weight:normal;">OpenScreenAnimation</div>
<div class="r" style="left:827.70px;top:463.40px;width:41.80px;height:16.80px;background:#ffffff;border-radius:2px;box-shadow:0 0 0 0.6px #e2e2e2, 0 0.8px 1.2px rgba(0,0,0,0.12)"></div>
<div class="t" style="left:829.80px;top:472.61px;font-size:9.5px;color:#444;font-weight:normal;">Default</div>
<svg class="r" style="left:861.50px;top:468.80px" width="6" height="6" viewBox="0 0 6 6"><path d="M1.20,1.70 L4.80,1.70 L3,4.30 Z" fill="#444"/></svg>
<div class="t" style="left:828.90px;top:494.11px;font-size:9.19px;color:#555;font-weight:normal;">ScreenOrientation</div>
<div class="r" style="left:827.70px;top:500.80px;width:60.90px;height:17.20px;background:#ffffff;border-radius:2px;box-shadow:0 0 0 0.6px #e2e2e2, 0 0.8px 1.2px rgba(0,0,0,0.12)"></div>
<div class="t" style="left:829.60px;top:510.42px;font-size:9.45px;color:#444;font-weight:normal;">Unspecified</div>
<svg class="r" style="left:880.20px;top:506.40px" width="6" height="6" viewBox="0 0 6 6"><path d="M1.20,1.70 L4.80,1.70 L3,4.30 Z" fill="#444"/></svg>
<div class="t" style="left:828.90px;top:530.59px;font-size:9.25px;color:#555;font-weight:normal;">Scrollable</div>
<div class="r" style="left:829.30px;top:540.50px;width:8.50px;height:8.50px;background:#e6e6e6;border:1px solid #a9a9a9;border-radius:1.5px;box-sizing:border-box"></div>
<div class="t" style="left:828.90px;top:565.41px;font-size:9.21px;color:#555;font-weight:normal;">ShowStatusBar</div>
<div class="r" style="left:829.30px;top:575.30px;width:8.50px;height:8.60px;background:#e6e6e6;border:1px solid #a9a9a9;border-radius:1.5px;box-sizing:border-box"></div>
<svg class="r" style="left:829px;top:575px" width="9" height="9" viewBox="0 0 9 9"><path d="M1.8,4.6 L3.6,6.8 L7.4,1.6" fill="none" stroke="#222" stroke-width="1.6"/></svg>
<div class="t" style="left:268.40px;top:536.41px;font-size:9.5px;color:#555;font-weight:bold;">Non-visible components</div>
<svg class="r" style="left:301.20px;top:548.00px" width="10.8" height="11.8" viewBox="0 0 10.8 11.8"><rect x="0" y="0" width="10.8" height="11.8" rx="3.2" fill="#5b9deb"/><path d="M2.92,3.78 L7.78,7.79 L5.40,9.91 L5.40,1.89 L7.78,4.01 L2.92,8.02" fill="none" stroke="#fff" stroke-width="1"/></svg>
<svg class="r" style="left:355.00px;top:548.00px" width="11.5" height="12" viewBox="0 0 11.5 12"><defs><linearGradient id="ck355" x1="0" y1="0" x2="0" y2="1"><stop offset="0" stop-color="#f2f2f0"/><stop offset="1" stop-color="#cfcfcb"/></linearGradient></defs><circle cx="5.75" cy="7.20" r="4.60" fill="url(#ck355)" stroke="#bdbdb8" stroke-width="0.8"/><path d="M3.45,7.20 L5.40,9.12 L8.51,5.04" fill="none" stroke="#d2c43a" stroke-width="1.3"/><path d="M0.3,3.60 Q1.15,0.24 4.83,1.44 Z" fill="#8f8f8a"/><path d="M11.20,3.60 Q10.35,0.24 6.67,1.44 Z" fill="#8f8f8a"/></svg>
<div class="t" style="left:272.40px;top:568.01px;font-size:9.19px;color:#666;font-weight:normal;">BluetoothClient1</div>
<div class="t" style="left:346.40px;top:568.04px;font-size:9.12px;color:#666;font-weight:normal;">Clock1</div>
</body></html>
